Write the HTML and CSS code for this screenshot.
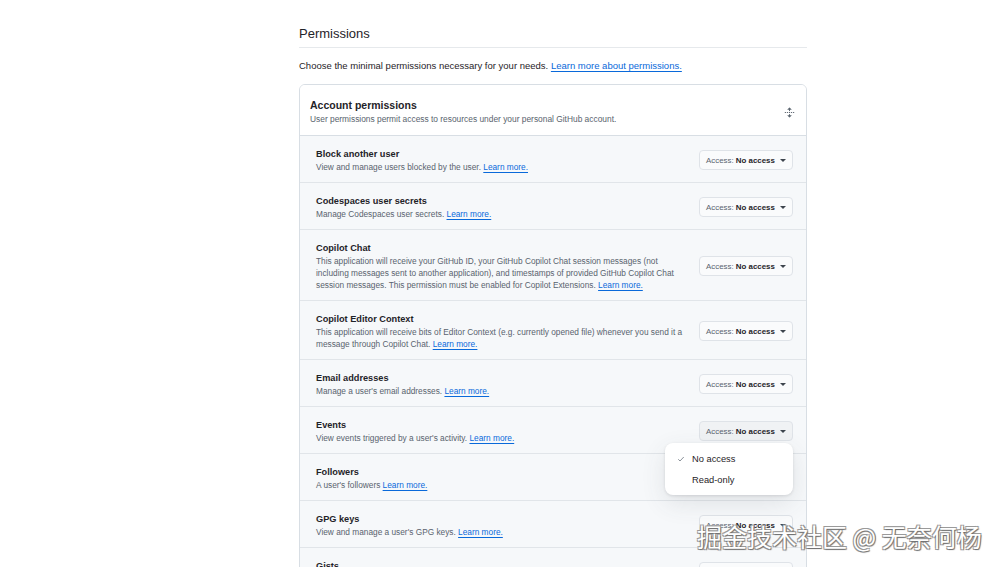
FILE: index.html
```html
<!DOCTYPE html>
<html lang="en">
<head>
<meta charset="utf-8">
<title>Permissions</title>
<link rel="stylesheet" href="styles.css">
</head>
<body>
<div class="page">
  <main class="content">
    <h2 class="section-title">Permissions</h2>
    <p class="section-desc">Choose the minimal permissions necessary for your needs. <a href="#" class="link">Learn more about permissions.</a></p>

    <section class="card">
      <header class="card-head">
        <div>
          <h3 class="card-title">Account permissions</h3>
          <p class="card-sub">User permissions permit access to resources under your personal GitHub account.</p>
        </div>
        <button class="fold" aria-label="Collapse">
          <svg viewBox="0 0 16 16" width="11" height="11"><path fill="#59636e" d="m8.177.677 2.896 2.896a.25.25 0 0 1-.177.427H8.750v1.25a.75.75 0 0 1-1.5 0V4H5.104a.25.25 0 0 1-.177-.427L7.823.677a.25.25 0 0 1 .354 0ZM7.25 10.75a.75.75 0 0 1 1.5 0V12h2.146a.25.25 0 0 1 .177.427l-2.896 2.896a.25.25 0 0 1-.354 0l-2.896-2.896A.25.25 0 0 1 5.104 12H7.25v-1.25Zm-5-2a.75.75 0 0 0 0-1.5h-.5a.75.75 0 0 0 0 1.5h.5ZM6 8a.75.75 0 0 1-.75.75h-.5a.75.75 0 0 1 0-1.5h.5A.75.75 0 0 1 6 8Zm2.25.75a.75.75 0 0 0 0-1.5h-.5a.75.75 0 0 0 0 1.5h.5ZM12 8a.75.75 0 0 1-.75.75h-.5a.75.75 0 0 1 0-1.5h.5A.75.75 0 0 1 12 8Zm2.25.75a.75.75 0 0 0 0-1.5h-.5a.75.75 0 0 0 0 1.5h.5Z"/></svg>
        </button>
      </header>

      <div class="row">
        <div class="row-text">
          <div class="row-title">Block another user</div>
          <div class="row-desc">View and manage users blocked by the user. <a href="#" class="link">Learn more.</a></div>
        </div>
        <div class="action"><button class="access">Access: <b>No access</b><span class="caret"></span></button></div>
      </div>

      <div class="row">
        <div class="row-text">
          <div class="row-title">Codespaces user secrets</div>
          <div class="row-desc">Manage Codespaces user secrets. <a href="#" class="link">Learn more.</a></div>
        </div>
        <div class="action"><button class="access">Access: <b>No access</b><span class="caret"></span></button></div>
      </div>

      <div class="row">
        <div class="row-text">
          <div class="row-title">Copilot Chat</div>
          <div class="row-desc">This application will receive your GitHub ID, your GitHub Copilot Chat session messages (not including messages sent to another application), and timestamps of provided GitHub Copilot Chat session messages. This permission must be enabled for Copilot Extensions. <a href="#" class="link">Learn more.</a></div>
        </div>
        <div class="action"><button class="access">Access: <b>No access</b><span class="caret"></span></button></div>
      </div>

      <div class="row">
        <div class="row-text">
          <div class="row-title">Copilot Editor Context</div>
          <div class="row-desc">This application will receive bits of Editor Context (e.g. currently opened file) whenever you send it a message through Copilot Chat. <a href="#" class="link">Learn more.</a></div>
        </div>
        <div class="action"><button class="access">Access: <b>No access</b><span class="caret"></span></button></div>
      </div>

      <div class="row">
        <div class="row-text">
          <div class="row-title">Email addresses</div>
          <div class="row-desc">Manage a user's email addresses. <a href="#" class="link">Learn more.</a></div>
        </div>
        <div class="action"><button class="access">Access: <b>No access</b><span class="caret"></span></button></div>
      </div>

      <div class="row">
        <div class="row-text">
          <div class="row-title">Events</div>
          <div class="row-desc">View events triggered by a user's activity. <a href="#" class="link">Learn more.</a></div>
        </div>
        <div class="action">
          <button class="access active">Access: <b>No access</b><span class="caret"></span></button>
          <ul class="menu">
            <li class="menu-item"><span class="check">
              <svg viewBox="0 0 16 16" width="8" height="8"><path fill="none" stroke="#59636e" stroke-width="1.4" d="M2.5 8.5l3.5 3.5 7.5-8"/></svg>
            </span>No access</li>
            <li class="menu-item"><span class="check"></span>Read-only</li>
          </ul>
        </div>
      </div>

      <div class="row">
        <div class="row-text">
          <div class="row-title">Followers</div>
          <div class="row-desc">A user's followers <a href="#" class="link">Learn more.</a></div>
        </div>
        <div class="action"></div>
      </div>

      <div class="row">
        <div class="row-text">
          <div class="row-title">GPG keys</div>
          <div class="row-desc">View and manage a user's GPG keys. <a href="#" class="link">Learn more.</a></div>
        </div>
        <div class="action"><button class="access">Access: <b>No access</b><span class="caret"></span></button></div>
      </div>

      <div class="row">
        <div class="row-text">
          <div class="row-title">Gists</div>
          <div class="row-desc">Create and modify a user's gists and comments. <a href="#" class="link">Learn more.</a></div>
        </div>
        <div class="action"><button class="access">Access: <b>No access</b><span class="caret"></span></button></div>
      </div>
    </section>
  </main>
</div>
<div class="watermark">掘金技术社区 @ 无奈何杨</div>
</body>
</html>
```
FILE: styles.css
```css
* { box-sizing: border-box; }
html, body { margin: 0; padding: 0; }
body {
  background: #ffffff;
  color: #1f2328;
  font-family: "Liberation Sans", Arial, sans-serif;
  height: 567px;
  overflow: hidden;
  position: relative;
}
.page {
  display: flex;
  padding-left: 299px;
}
.content {
  width: 508px;
  padding-top: 25px;
}
.section-title {
  margin: 0;
  font-size: 13px;
  font-weight: 400;
  line-height: 18px;
  padding-bottom: 4px;
  border-bottom: 1px solid #e6e9ec;
}
.section-desc {
  margin: 12px 0 12px;
  font-size: 9.5px;
  line-height: 12px;
}
.link {
  color: #0969da;
  text-decoration: underline;
  text-underline-offset: 1.5px;
}
.card {
  border: 1px solid #d8dee4;
  border-radius: 6px;
  overflow: hidden;
}
.card-head {
  background: #ffffff;
  display: flex;
  align-items: center;
  justify-content: space-between;
  padding: 14px 11px 10px 10px;
  border-bottom: 1px solid #d8dee4;
}
.card-title {
  margin: 0;
  font-size: 10.5px;
  font-weight: 700;
  line-height: 13px;
}
.card-sub {
  margin: 1px 0 0;
  font-size: 8.4px;
  line-height: 12px;
  color: #59636e;
}
.fold {
  border: 0;
  background: none;
  padding: 0;
  width: 11px;
  height: 11px;
  display: flex;
}
.row {
  background: #f6f8fa;
  display: flex;
  align-items: center;
  justify-content: space-between;
  gap: 8px;
  padding: 11.5px 13px 9.5px 16px;
  border-bottom: 1px solid #e1e5e9;
}
.row-text { flex: 1; max-width: 377px; }
.row-title {
  font-size: 9.2px;
  font-weight: 700;
  line-height: 13px;
}
.row-desc {
  font-size: 8.3px;
  line-height: 12px;
  color: #59636e;
}
.action {
  position: relative;
  width: 94px;
  display: flex;
  justify-content: flex-end;
}
.access {
  font-family: inherit;
  width: 94px;
  height: 20px;
  border: 1px solid #dfe3e8;
  border-radius: 4px;
  background: #fafbfc;
  color: #59636e;
  font-size: 7.9px;
  display: flex;
  align-items: center;
  padding: 0 6px;
  white-space: pre;
}
.access b {
  color: #1f2328;
  font-weight: 700;
}
.access.active { background: #f0f2f4; }
.caret {
  margin-left: auto;
  width: 0; height: 0;
  border-left: 3px solid transparent;
  border-right: 3px solid transparent;
  border-top: 3px solid #3d444d;
}
.menu {
  position: absolute;
  right: 0;
  top: 22px;
  width: 128px;
  margin: 0;
  padding: 5px 0 5px;
  list-style: none;
  background: #ffffff;
  border-radius: 8px;
  box-shadow: 0 1px 3px rgba(31,35,40,0.12), 0 8px 24px rgba(66,74,83,0.12);
  z-index: 2;
}
.menu-item {
  display: flex;
  align-items: center;
  height: 21px;
  padding-left: 12px;
  font-size: 9.3px;
  color: #1f2328;
}
.check {
  width: 15px;
  display: flex;
  align-items: center;
}
.watermark {
  position: absolute;
  left: 697px;
  top: 519px;
  font-family: "Noto Sans CJK SC", sans-serif;
  font-size: 25px;
  line-height: 34px;
  color: #ffffff;
  text-shadow: 1px 1px 1px #6e6e6e, -1px -1px 0 #9a9a9a, 1px -1px 0 #9a9a9a, -1px 1px 0 #9a9a9a;
  white-space: nowrap;
  z-index: 5;
}
```
